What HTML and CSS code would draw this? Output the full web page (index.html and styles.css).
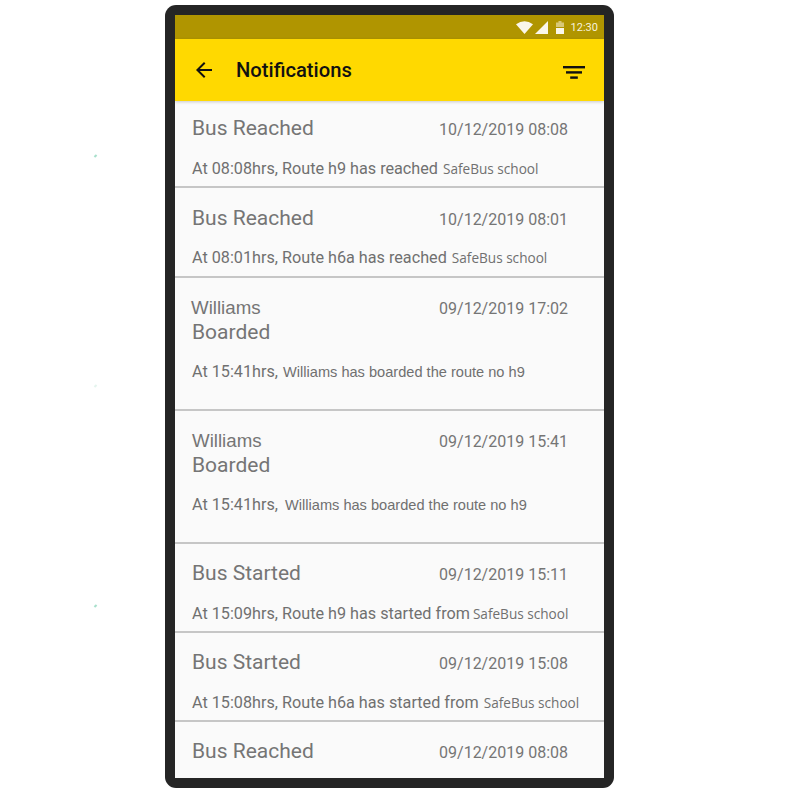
FILE: index.html
```html
<!DOCTYPE html>
<html lang="en">
<head>
  <meta charset="UTF-8" />
  <title>Notifications</title>
  <link rel="stylesheet" href="styles.css">
</head>
<body>

  <!-- stray specks left of the phone -->
  <i class="speck speck-1"></i>
  <i class="speck speck-2"></i>
  <i class="speck speck-3"></i>

  <div class="phone">
    <div class="screen">

      <div class="status-bar">
        <svg class="ic-wifi" width="17" height="13" viewBox="0 0 17 13"><path d="M0 3.2 Q8.5 -2.6 17 3.2 L8.5 13 Z" fill="#faf6ea"/></svg>
        <svg class="ic-signal" width="13" height="13" viewBox="0 0 13 13"><path d="M13 0 V13 H0 Z" fill="#faf6ea"/></svg>
        <svg class="ic-battery" width="8" height="13" viewBox="0 0 8 13">
          <path d="M2.5 0 H5.5 V1.5 H8 V6 H0 V1.5 H2.5 Z" fill="#d8c878"/>
          <path d="M0 7 H8 V13 H0 Z" fill="#faf6ea"/>
        </svg>
        <span class="clock">12:30</span>
      </div>

      <div class="app-bar">
        <svg class="ic-back" width="24" height="24" viewBox="0 0 24 24"><path d="M20 11H7.83l5.59-5.59L12 4l-8 8 8 8 1.41-1.41L7.83 13H20v-2z" fill="#111"/></svg>
        <span class="app-title">Notifications</span>
        <svg class="ic-filter" width="22" height="13" viewBox="0 0 22 13">
          <rect x="0" y="0" width="22" height="2.4"/>
          <rect x="3" y="5.2" width="16" height="2.4"/>
          <rect x="7.2" y="10.4" width="7.6" height="2.4"/>
        </svg>
      </div>

      <div class="list">
        <div class="row row-first">
          <div class="row-head">
            <div class="row-title">Bus Reached</div>
            <div class="row-date">10/12/2019 08:08</div>
          </div>
          <div class="row-text">At 08:08hrs, Route h9 has reached <span class="school">SafeBus school</span></div>
        </div>

        <div class="row row-second">
          <div class="row-head">
            <div class="row-title">Bus Reached</div>
            <div class="row-date">10/12/2019 08:01</div>
          </div>
          <div class="row-text">At 08:01hrs, Route h6a has reached <span class="school">SafeBus school</span></div>
        </div>

        <div class="row row-tall">
          <div class="row-head">
            <div class="row-title"><span class="name name-shift">Williams</span><br>Boarded</div>
            <div class="row-date">09/12/2019 17:02</div>
          </div>
          <div class="row-text">At 15:41hrs, <span class="boarded">Williams has boarded the route no h9</span></div>
        </div>

        <div class="row row-tall">
          <div class="row-head">
            <div class="row-title"><span class="name">Williams</span><br>Boarded</div>
            <div class="row-date">09/12/2019 15:41</div>
          </div>
          <div class="row-text">At 15:41hrs, <span class="boarded boarded-wide">Williams has boarded the route no h9</span></div>
        </div>

        <div class="row">
          <div class="row-head">
            <div class="row-title">Bus Started</div>
            <div class="row-date">09/12/2019 15:11</div>
          </div>
          <div class="row-text">At 15:09hrs, Route h9 has started from <span class="school school-tight">SafeBus school</span></div>
        </div>

        <div class="row">
          <div class="row-head">
            <div class="row-title">Bus Started</div>
            <div class="row-date">09/12/2019 15:08</div>
          </div>
          <div class="row-text">At 15:08hrs, Route h6a has started from <span class="school">SafeBus school</span></div>
        </div>

        <div class="row row-last">
          <div class="row-head">
            <div class="row-title">Bus Reached</div>
            <div class="row-date">09/12/2019 08:08</div>
          </div>
        </div>
      </div>

    </div>
  </div>

</body>
</html>
```

FILE: styles.css
```css
* { margin: 0; padding: 0; box-sizing: border-box; }
html, body {
  height: 100%;
  background: #fff;
  font-family: Roboto, sans-serif;
  overflow: hidden;
}

body {
  padding: 5px 0 0 165px;
}

.speck {
  position: absolute;
  left: 94px;
  width: 3px;
  height: 2px;
  background: #a8e0cc;
  transform: rotate(-45deg);
}
.speck-1 { top: 155px; }
.speck-2 { top: 385px; background: #e4f4ee; }
.speck-3 { top: 605px; }

.phone {
  width: 449px;
  height: 783px;
  padding: 10px;
  background: #252525;
  border-radius: 11px;
}

.screen {
  width: 100%;
  height: 100%;
  display: flex;
  flex-direction: column;
  background: #fafafa;
  overflow: hidden;
}

.status-bar {
  flex: none;
  height: 24px;
  display: flex;
  align-items: center;
  justify-content: flex-end;
  padding-right: 6px;
  background: #b09500;
}
.ic-signal { margin-left: 2px; }
.ic-battery { margin-left: 8px; }
.clock {
  margin-left: 7px;
  color: #f7f2dd;
  font-size: 11px;
}

.app-bar {
  flex: none;
  height: 62px;
  display: flex;
  align-items: center;
  padding: 0 19px 0 17px;
  background: #ffd900;
  box-shadow: 0 1px 3px rgba(0, 0, 0, 0.2);
  position: relative;
}
.app-title {
  margin-left: 20px;
  color: #111;
  font-size: 20.2px;
  font-weight: 500;
}
.ic-filter {
  margin-left: auto;
  margin-top: 4px;
  fill: #111;
}

.list {
  flex: 1;
}

.row {
  padding: 17px 36px 7px 17px;
  border-bottom: 2px solid #c6c6c6;
  color: #707070;
}
.row-first { padding-top: 15px; }
.row-second { padding-top: 18px; }
.row-second .row-text { margin-top: 17px; }
.row-second { padding-bottom: 8px; }
.row-tall { padding-bottom: 27px; }
.row-tall .row-text { margin-top: 17px; }
.row-last { border-bottom: 0; }

.row-head {
  display: flex;
  justify-content: space-between;
  align-items: flex-start;
}

.row-title {
  font-size: 21px;
  line-height: 25px;
  color: #757575;
}

.row-date {
  margin-top: 3px;
  font-size: 16px;
  line-height: 22px;
  color: #757575;
}

.row-text {
  margin-top: 18px;
  font-size: 16.2px;
  line-height: 20px;
  white-space: nowrap;
}

.school {
  margin-left: 1px;
  font-family: "Open Sans", sans-serif;
  font-size: 13.6px;
}
.school-tight { margin-left: -1px; }

.name {
  font-family: "Liberation Sans", sans-serif;
  font-size: 18.7px;
}
.name-shift { margin-left: -1px; }

.boarded {
  margin-left: 1px;
  font-family: "Liberation Sans", sans-serif;
  font-size: 14.6px;
}
.boarded-wide { margin-left: 3px; }
```
